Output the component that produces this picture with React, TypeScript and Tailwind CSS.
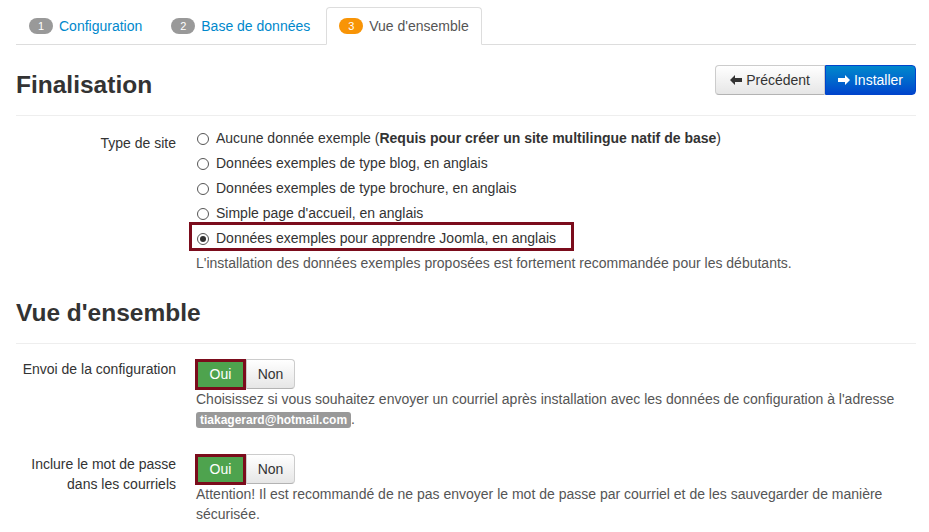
function Badge({ n, active }: { n: number; active?: boolean }) {
  return (
    <span
      className={
        "inline-flex h-[16px] w-[24px] items-center justify-center rounded-full text-[11px] leading-none text-white " +
        (active ? "bg-[#f89406]" : "bg-[#999]")
      }
    >
      {n}
    </span>
  );
}

function Tab({ n, label, active }: { n: number; label: string; active?: boolean }) {
  return (
    <div
      className={
        "mr-[3px] -mb-px flex items-center gap-[6px] rounded-t-[4px] border px-3 py-2 leading-5 " +
        (active ? "border-[#ddd] border-b-white bg-white text-[#555]" : "border-transparent text-[#0088cc]")
      }
    >
      <Badge n={n} active={active} />
      <span>{label}</span>
    </div>
  );
}

function Arrow({ dir }: { dir: "left" | "right" }) {
  return (
    <svg width="12" height="10" viewBox="0 0 12 10" className={dir === "right" ? "rotate-180" : ""}>
      <path d="M0 5 L5 0 L5 3 L12 3 L12 7 L5 7 L5 10 Z" fill="currentColor" />
    </svg>
  );
}

function Radio({ checked, children }: { checked?: boolean; children: React.ReactNode }) {
  return (
    <div className="relative flex h-[25px] items-center">
      <span className="ml-[1px] mr-[7px] flex h-[12px] w-[12px] items-center justify-center rounded-full border border-[#555] bg-white">
        {checked && <span className="h-[6px] w-[6px] rounded-full bg-[#333]" />}
      </span>
      <span>{children}</span>
      {checked && (
        <span className="pointer-events-none absolute left-[-7px] top-[-4px] h-[29px] w-[385px] border-[3px] border-[#7b0c1c]" />
      )}
    </div>
  );
}

function YesNo() {
  return (
    <div className="flex h-[30px] items-start">
      <div className="flex h-[31px] w-[51px] items-center justify-center border-[3px] border-[#7b0c1c] bg-[#4ea34e] text-white">
        Oui
      </div>
      <div className="flex h-[30px] w-[49px] items-center justify-center rounded-r-[4px] border border-[#ccc] border-b-[#b3b3b3] bg-linear-to-b from-white to-[#e6e6e6] text-[#333]">
        Non
      </div>
    </div>
  );
}

export default function App() {
  return (
    <div className="h-[532px] w-[929px] overflow-hidden bg-white font-['Liberation_Sans',Arial,sans-serif] text-[14px] text-[#333]">
      <div className="ml-4 w-[900px] pt-[7px]">
        <div className="flex border-b border-[#ddd]">
          <Tab n={1} label="Configuration" />
          <Tab n={2} label="Base de données" />
          <Tab n={3} label="Vue d'ensemble" active />
        </div>

        <div className="mt-[20px] flex h-[40px] items-start justify-between">
          <h3 className="text-[24.5px] font-bold leading-[40px] text-[#333]">Finalisation</h3>
          <div className="flex">
            <button className="flex h-[30px] items-center gap-[4px] rounded-l-[4px] border border-[#ccc] border-b-[#b3b3b3] bg-linear-to-b from-white to-[#e6e6e6] px-[14px] text-[#333]">
              <Arrow dir="left" />
              Précédent
            </button>
            <button className="flex h-[30px] items-center gap-[4px] rounded-r-[4px] border border-[#0044cc] bg-linear-to-b from-[#0088cc] to-[#0044cc] px-3 text-white">
              <Arrow dir="right" />
              Installer
            </button>
          </div>
        </div>
        <div className="mt-[10px] h-px bg-[#eee]" />

        <div className="mt-[10px] flex">
          <div className="w-[160px] pt-[7px] text-right leading-5">Type de site</div>
          <div className="ml-[20px]">
            <Radio>
              Aucune donnée exemple (<b>Requis pour créer un site multilingue natif de base</b>)
            </Radio>
            <Radio>Données exemples de type blog, en anglais</Radio>
            <Radio>Données exemples de type brochure, en anglais</Radio>
            <Radio>Simple page d'accueil, en anglais</Radio>
            <Radio checked>Données exemples pour apprendre Joomla, en anglais</Radio>
            <div className="leading-[25px] text-[#555]">
              L'installation des données exemples proposées est fortement recommandée pour les débutants.
            </div>
          </div>
        </div>

        <div className="mt-[17px] h-[40px]">
          <h3 className="text-[24.5px] font-bold leading-[40px] text-[#333]">Vue d'ensemble</h3>
        </div>
        <div className="mt-[10px] h-px bg-[#eee]" />

        <div className="mt-[15px] flex">
          <div className="w-[160px] text-right leading-5">Envoi de la configuration</div>
          <div className="ml-[19px] w-[721px]">
            <YesNo />
            <div className="ml-[1px] leading-5 text-[#555]">
              Choisissez si vous souhaitez envoyer un courriel après installation avec les données de configuration à l'adresse{" "}
              <span className="rounded-[3px] bg-[#999] px-[4px] py-[1px] text-[12px] font-bold text-white">
                tiakagerard@hotmail.com
              </span>
              .
            </div>
          </div>
        </div>

        <div className="mt-[24px] flex">
          <div className="w-[160px] text-right leading-5">
            Inclure le mot de passe
            <br />
            dans les courriels
          </div>
          <div className="ml-[19px] w-[721px]">
            <YesNo />
            <div className="ml-[1px] leading-5 text-[#555]">
              Attention! Il est recommandé de ne pas envoyer le mot de passe par courriel et de les sauvegarder de manière sécurisée.
            </div>
          </div>
        </div>
      </div>
    </div>
  );
}
